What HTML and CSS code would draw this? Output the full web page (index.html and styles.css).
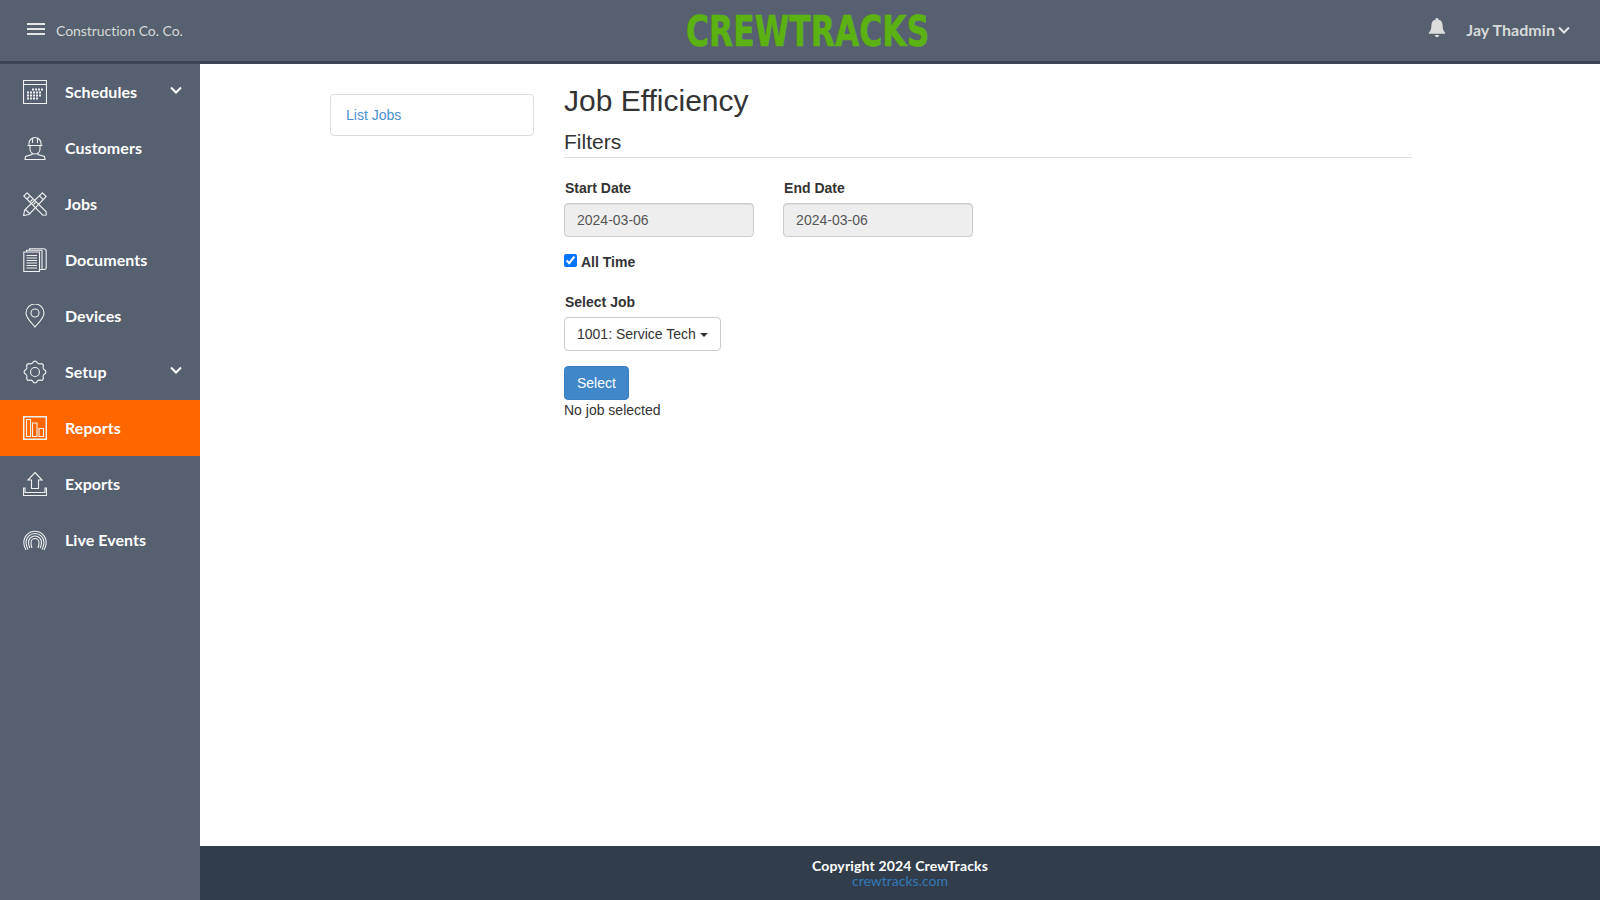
FILE: index.html
```html
<!DOCTYPE html>
<html lang="en">
<head>
<meta charset="utf-8">
<title>Job Efficiency</title>
<link rel="stylesheet" href="styles.css">
</head>
<body>
<header class="topbar">
  <div class="brand">
    <svg class="burger" viewBox="0 0 18 12" width="18" height="12"><path d="M0 1h18M0 6h18M0 11h18"/></svg>
    <span>Construction Co. Co.</span>
  </div>
  <div class="logo">CREWTRACKS</div>
  <div class="user">
    <svg class="bell" viewBox="0 0 18 20" width="18" height="20"><path d="M9 0c-.9 0-1.400.6-1.400 1.400C4.800 2.100 3.400 4.300 3.400 7.200c0 4-.9 5.700-2.400 7.200-.5.500-.2 1.300.5 1.300h15c.7 0 1-.8.5-1.300-1.500-1.500-2.400-3.200-2.400-7.200 0-2.900-1.400-5.100-4.200-5.800C10.400.6 9.900 0 9 0zM6.800 17c0 1.200 1 2.200 2.200 2.200s2.200-1 2.200-2.200z"/></svg>
    <span>Jay Thadmin</span>
    <svg class="chev" viewBox="0 0 12 8" width="12" height="8"><path d="M1 1.500l5 5 5-5"/></svg>
  </div>
</header>
<div class="shell">
  <nav class="sidebar">
    <a class="nav-item"><svg class="ico" viewBox="0 0 24 24"><path d="M.5.500h23v23H.5zM.5 4.500h23"/><path class="dots" d="M9 9.500h2M12 9.500h2M15 9.500h2M18 9.500h2M4 12.500h2M7 12.500h2M10 12.500h2M13 12.500h2M16 12.500h2M4 15.500h2M7 15.500h2M10 15.500h2M13 15.500h2M16 15.500h2M4 18.500h2M7 18.500h2M10 18.500h2M13 18.500h2"/></svg><span class="label">Schedules</span><svg class="chev side" viewBox="0 0 12 8" width="12" height="8"><path d="M1 1.500l5 5 5-5"/></svg></a>
    <a class="nav-item"><svg class="ico" viewBox="0 0 24 24"><path d="M4.500 9.500h15M6 9.500V7.500a6 6 0 0 1 12 0v2M9.500 2v5M14.500 2v5M7 9.500v3.500c0 2.800 2.200 5 5 5s5-2.200 5-5V9.500M9 17v1.500L2.500 20.500 2 23.500h20l-.5-3L15 18.500V17"/></svg><span class="label">Customers</span></a>
    <a class="nav-item"><svg class="ico" viewBox="0 0 24 24"><path d="M4 .8L.8 4l19 19.200 3.400-.2V19.800zM6.500 4.500L4 7M9.500 7.500l-2 2M12.500 10.500l-2 2"/><path d="M19.500.8l3.700 3.700L6 22.500l-5.400 1 1-5.400zM16.500 3.800l3.800 3.800M2.500 17.500l4 4"/></svg><span class="label">Jobs</span></a>
    <a class="nav-item"><svg class="ico" viewBox="0 0 24 24"><path d="M.8 4h15.700v19.500H.8zM3.500 7.500h10.500M3.500 10h10.500M3.500 12.500h10.500M3.500 15h10.500M3.500 17.500h10.500M3.500 20h10.500M3.500 4V2.300h15.500v19.200h-2.500M6.500 2.300V.8h14c1.800 0 2.700 1 2.700 2.500v16c0 1.500-1 2.200-2.200 2.200H19"/></svg><span class="label">Documents</span></a>
    <a class="nav-item"><svg class="ico" viewBox="0 0 24 24"><path d="M12 23c-2-3.500-9-8-9-14a9 9 0 0 1 18 0c0 6-7 10.500-9 14z"/><circle cx="12" cy="9" r="4"/></svg><span class="label">Devices</span></a>
    <a class="nav-item"><svg class="ico" viewBox="0 0 24 24"><circle cx="12" cy="12" r="4.500"/><path transform="translate(12 12) scale(1.06) translate(-12 -12)" d="M9.980 3.230A2.100 2.100 0 0 1 14.020 3.230A3 3 0 0 0 16.770 4.370A2.100 2.100 0 0 1 19.630 7.230A3 3 0 0 0 20.770 9.980A2.100 2.100 0 0 1 20.770 14.020A3 3 0 0 0 19.630 16.770A2.100 2.100 0 0 1 16.770 19.630A3 3 0 0 0 14.020 20.770A2.100 2.100 0 0 1 9.980 20.770A3 3 0 0 0 7.230 19.630A2.100 2.100 0 0 1 4.370 16.770A3 3 0 0 0 3.230 14.020A2.100 2.100 0 0 1 3.230 9.980A3 3 0 0 0 4.370 7.230A2.100 2.100 0 0 1 7.230 4.370A3 3 0 0 0 9.980 3.230z"/></svg><span class="label">Setup</span><svg class="chev side" viewBox="0 0 12 8" width="12" height="8"><path d="M1 1.500l5 5 5-5"/></svg></a>
    <a class="nav-item active"><svg class="ico" viewBox="0 0 24 24"><path class="frame" d="M.7.700h22.600v22.600H.7z"/><path d="M3.500 3.500h4v17h-4zM9.500 7h4.500v13.500H9.500zM16 12.500h4.500v8H16z"/></svg><span class="label">Reports</span></a>
    <a class="nav-item"><svg class="ico" viewBox="0 0 24 24"><path d="M12 .5l7 7.500h-3.500v8.500h-7V8H5zM.5 16v7.500h23V16h-1.500v4.500H2V16z"/></svg><span class="label">Exports</span></a>
    <a class="nav-item"><svg class="ico" viewBox="0 0 24 24"><path d="M3 22C1.500 19.500.8 17.500.8 14.500A11.200 11.200 0 0 1 23.200 14.500C23.200 17.500 22.500 19.500 21 22M5 21.500C3.800 19 3 17 3 14.500a9 9 0 0 1 18 0c0 2.500-.8 4.500-2 7M6.800 20C5.900 18 5.500 16 5.500 14.500a6.500 6.500 0 0 1 13 0c0 1.500-.4 3.500-1.300 5.500M9 20c-.7-1.500-1-3.500-1-5.500a4 4 0 0 1 8 0c0 2-.3 4-1 5.500"/></svg><span class="label">Live Events</span></a>
  </nav>
  <div class="main">
    <main class="content">
      <aside class="side-col">
        <div class="list-box"><a class="link">List Jobs</a></div>
      </aside>
      <section class="body-col">
        <h1>Job Efficiency</h1>
        <h3>Filters</h3>
        <div class="date-row">
          <div class="field"><label>Start Date</label><input class="date" type="text" value="2024-03-06" disabled></div>
          <div class="field"><label>End Date</label><input class="date" type="text" value="2024-03-06" disabled></div>
        </div>
        <label class="check"><input type="checkbox" checked> All Time</label>
        <div class="job-field">
          <label>Select Job</label>
          <button class="dropdown" type="button">1001: Service Tech <span class="caret"></span></button>
        </div>
        <button class="primary" type="button">Select</button>
        <p class="note">No job selected</p>
      </section>
    </main>
    <footer class="footer">
      <strong>Copyright 2024 CrewTracks</strong>
      <a class="foot-link">crewtracks.com</a>
    </footer>
  </div>
</div>
</body>
</html>
```
FILE: styles.css
```css
* { box-sizing: border-box; }
html, body { height: 100%; }
body { margin: 0; height: 900px; overflow: hidden; display: flex; flex-direction: column; font: 14px/20px "Liberation Sans", Arial, sans-serif; color: #333; background: #fff; }
.topbar { height: 64px; flex: none; background: #566070; border-bottom: 3px solid #3a4452; display: flex; align-items: center; justify-content: space-between; position: relative; font-family: Lato, sans-serif; color: #d9d9d9; }
.brand { display: flex; align-items: center; padding-left: 27px; font-size: 14px; }
.brand span { margin-left: 11px; letter-spacing: -.05px; }
.burger { stroke: #e4e4e4; stroke-width: 2; fill: none; margin-top: -4px; }
.logo { position: absolute; left: 686px; top: 10px; font: bold 42px/44px "DejaVu Sans", sans-serif; color: #5cb212; -webkit-text-stroke: .6px #5cb212; transform-origin: 0 50%; transform: scaleX(.748); white-space: nowrap; }
.user { display: flex; align-items: center; font-size: 16px; font-weight: 700; padding-right: 30px; margin-top: -1px; }
.bell { fill: #dcdcdc; margin-right: 20px; margin-top: -4px; margin-left: -1px; }
.user span { letter-spacing: .06px; }
.chev { fill: none; stroke: #e4e4e4; stroke-width: 2; margin-left: 3px; }
.shell { flex: 1; display: flex; min-height: 0; }
.sidebar { width: 200px; flex: none; background: #566070; font-family: Lato, sans-serif; }
.nav-item { height: 56px; display: flex; align-items: center; padding-left: 23px; color: #fff; font-size: 16px; font-weight: 700; position: relative; }
.nav-item.active { background: #ff6600; }
.ico { width: 24px; height: 24px; flex: none; fill: none; stroke: #f0f0f0; stroke-width: 1.1; }
.ico .dots { stroke-width: 2; }
.ico .frame { stroke-width: 1.500; }
.label { margin-left: 18px; letter-spacing: .05px; }
.chev.side { position: absolute; left: 170px; top: 22px; margin: 0; stroke: #fff; }
.main { flex: 1; min-width: 0; display: flex; flex-direction: column; }
.content { flex: 1; display: flex; padding-left: 130px; }
.side-col { width: 234px; padding-top: 30px; flex: none; }
.list-box { width: 204px; height: 42px; border: 1px solid #ddd; border-radius: 4px; padding: 10px 15px; }
.link { color: #337ab7; }
.list-box .link { color: #4a8fd0; }
.body-col { width: 848px; padding-top: 0; }
h1 { font-size: 30px; line-height: 36px; font-weight: 400; margin: 19px 0 0; }
h3 { font-size: 21px; line-height: 23px; font-weight: 400; margin: 11px 0 0; padding-bottom: 4px; border-bottom: 1px solid #ddd; }
label { font-weight: 700; display: block; }
.date-row { display: flex; gap: 29.600px; margin-top: 20px; }
.field { width: 189.500px; }
.field label { padding-left: 1px; margin-bottom: 5px; }
.date { width: 100%; height: 34px; border: 1px solid #ccc; border-radius: 4px; background: #eee; color: #555; font: 14px "Liberation Sans", sans-serif; padding: 6px 12px; display: block; opacity: 1; box-shadow: inset 0 1px 1px rgba(0,0,0,.075); }
.check { display: flex; align-items: center; margin-top: 15px; height: 20px; }
.check input { margin: -4px 4px 0 0; width: 13px; height: 13px; accent-color: #0075ff; }
.job-field { margin-top: 20px; }
.job-field label { padding-left: 1px; margin-bottom: 5px; }
.dropdown { height: 34px; border: 1px solid #ccc; border-radius: 4px; background: #fff; color: #333; font: 14px "Liberation Sans", sans-serif; padding: 6px 12px; display: block; }
.caret { display: inline-block; width: 0; height: 0; border-top: 4px solid #333; border-left: 4px solid transparent; border-right: 4px solid transparent; vertical-align: middle; }
.primary { display: block; height: 34px; margin-top: 15px; border: 1px solid #3a7fc0; border-radius: 4px; background: #3f87c8; color: #fff; font: 14px "Liberation Sans", sans-serif; padding: 6px 12px; }
.note { margin: 0; }
.footer { height: 54px; flex: none; background: #323d4b; color: #fff; font-family: Lato, sans-serif; display: flex; flex-direction: column; align-items: center; padding-top: 12px; font-size: 14px; line-height: 15px; }
.footer strong { letter-spacing: .16px; }
.foot-link { color: #337ab7; }
```
